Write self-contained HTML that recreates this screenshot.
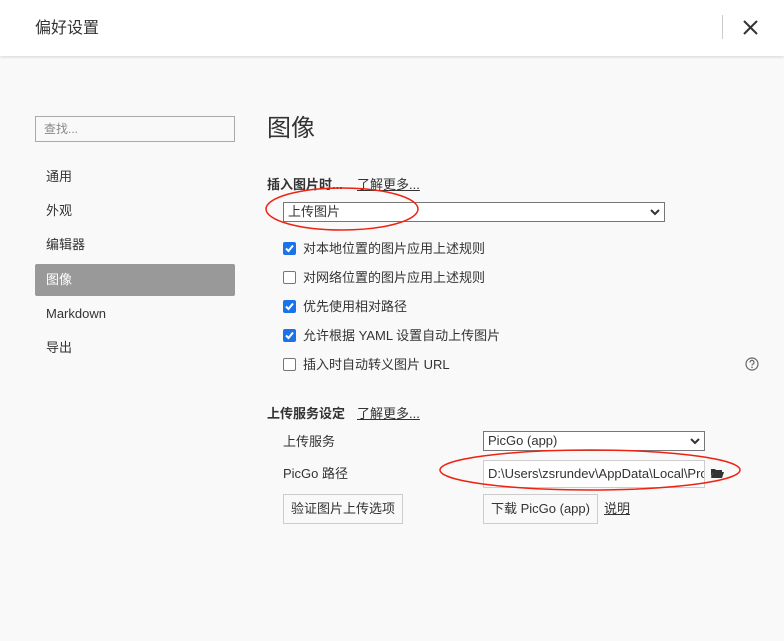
<!DOCTYPE html>
<html><head><meta charset="utf-8"><style>
*{box-sizing:border-box;margin:0;padding:0}
body{width:784px;height:641px;overflow:hidden;background:#f9f9f9;font-family:"Liberation Sans","Noto Sans CJK SC",sans-serif;color:#333;font-size:13px;line-height:15px;position:relative}
.hdr{position:absolute;left:0;top:0;width:784px;height:56px;background:#fff;box-shadow:0 1px 3px rgba(0,0,0,.15)}
.abs{position:absolute;white-space:nowrap}
.cb{position:absolute;width:13px;height:13px;border-radius:2px}
.cb.on{background:#1a73e8}
.cb.off{border:1px solid #767676;background:#fff}
.sel{position:absolute;background:#fff;border:1px solid #767676;height:20px;font-size:13px;line-height:18px;padding:0 4px;white-space:nowrap}
.btn{position:absolute;border:1px solid #ccc;background:#f9f9f9;font-size:13px;text-align:center}
u{text-decoration:underline}
</style></head><body>
<div class="hdr"></div>
<div class="abs" style="left:35px;top:19px;font-size:16px;line-height:20px;color:#333">偏好设置</div>
<div class="abs" style="left:722px;top:15px;width:1px;height:24px;background:#ccc"></div>
<svg class="abs" style="left:742px;top:19px" width="17" height="17" viewBox="0 0 17 17"><path d="M2 2L15 15M15 2L2 15" stroke="#333" stroke-width="2"/></svg>

<div class="abs" style="left:35px;top:116px;width:200px;height:26px;border:1px solid #aaa;background:#f9f9f9;font-size:12px;line-height:24px;color:#888;padding:0 8px">查找...</div>
<div class="abs" style="left:46px;top:169px">通用</div>
<div class="abs" style="left:46px;top:203px">外观</div>
<div class="abs" style="left:46px;top:237px">编辑器</div>
<div class="abs" style="left:35px;top:264px;width:200px;height:32px;background:#999;border-radius:2px"></div>
<div class="abs" style="left:46px;top:272px;color:#fff">图像</div>
<div class="abs" style="left:46px;top:306px">Markdown</div>
<div class="abs" style="left:46px;top:340px">导出</div>

<div class="abs" style="left:267px;top:114px;font-size:24px;line-height:30px;color:#333">图像</div>
<div class="abs" style="left:267px;top:177px;font-weight:bold">插入图片时...</div>
<div class="abs" style="left:357px;top:177px"><u>了解更多...</u></div>
<div class="sel" style="left:283px;top:202px;width:382px">上传图片</div>
<svg class="abs" style="left:650px;top:208px" width="10" height="8" viewBox="0 0 10 8"><path d="M1 2L5 6L9 2" stroke="#333" stroke-width="2" fill="none"/></svg>

<div class="cb on" style="left:283px;top:242px"></div><svg class="abs" style="left:283px;top:242px" width="13" height="13"><path d="M3 6.5L5.5 9L10 3.5" stroke="#fff" stroke-width="2" fill="none"/></svg>
<div class="abs" style="left:303px;top:241px">对本地位置的图片应用上述规则</div>
<div class="cb off" style="left:283px;top:271px"></div>
<div class="abs" style="left:303px;top:270px">对网络位置的图片应用上述规则</div>
<div class="cb on" style="left:283px;top:300px"></div><svg class="abs" style="left:283px;top:300px" width="13" height="13"><path d="M3 6.5L5.5 9L10 3.5" stroke="#fff" stroke-width="2" fill="none"/></svg>
<div class="abs" style="left:303px;top:299px">优先使用相对路径</div>
<div class="cb on" style="left:283px;top:329px"></div><svg class="abs" style="left:283px;top:329px" width="13" height="13"><path d="M3 6.5L5.5 9L10 3.5" stroke="#fff" stroke-width="2" fill="none"/></svg>
<div class="abs" style="left:303px;top:328px">允许根据 YAML 设置自动上传图片</div>
<div class="cb off" style="left:283px;top:358px"></div>
<div class="abs" style="left:303px;top:357px">插入时自动转义图片 URL</div>
<svg class="abs" style="left:745px;top:357px" width="14" height="14" viewBox="0 0 14 14"><circle cx="7" cy="7" r="6" stroke="#666" fill="none" stroke-width="1.2"/><path d="M5 5.5a2 2 0 1 1 2.5 1.8c-.5.2-.5.6-.5 1.2" stroke="#666" fill="none" stroke-width="1.2"/><circle cx="7" cy="10.3" r=".8" fill="#666"/></svg>

<div class="abs" style="left:267px;top:406px;font-weight:bold">上传服务设定</div>
<div class="abs" style="left:357px;top:406px"><u>了解更多...</u></div>
<div class="abs" style="left:283px;top:434px">上传服务</div>
<div class="sel" style="left:483px;top:431px;width:222px">PicGo (app)</div>
<svg class="abs" style="left:690px;top:437px" width="10" height="8" viewBox="0 0 10 8"><path d="M1 2L5 6L9 2" stroke="#333" stroke-width="2" fill="none"/></svg>
<div class="abs" style="left:283px;top:466px">PicGo 路径</div>
<div class="abs" style="left:483px;top:460px;width:222px;height:28px;border:1px solid #ccc;background:#fff;padding:0 4px;line-height:26px;overflow:hidden;font-size:13px">D:\Users\zsrundev\AppData\Local\Programs</div>
<svg class="abs" style="left:711px;top:468px" width="13" height="10" viewBox="0 0 13 10"><path d="M0 1h4l1 1h6v2H2L0 9z M2 4h11l-2 6H0z" fill="#333"/></svg>
<div class="btn" style="left:283px;top:494px;width:120px;height:30px;line-height:28px">验证图片上传选项</div>
<div class="btn" style="left:483px;top:494px;width:115px;height:30px;line-height:28px">下载 PicGo (app)</div>
<div class="abs" style="left:604px;top:501px"><u>说明</u></div>

<svg class="abs" style="left:0;top:0" width="784" height="641">
<ellipse cx="342" cy="209" rx="76" ry="21" stroke="#e21" stroke-width="1.5" fill="none"/>
<ellipse cx="590" cy="470" rx="150" ry="20" stroke="#e21" stroke-width="1.5" fill="none"/>
</svg>
</body></html>
